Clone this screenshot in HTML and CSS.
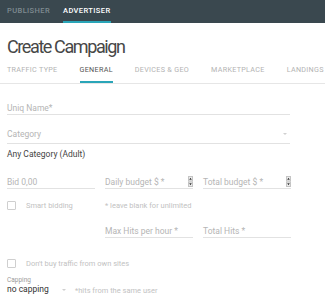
FILE: index.html
```html
<!DOCTYPE html>
<html lang="en">
<head>
    <meta charset="UTF-8">
    <meta name="viewport" content="width=device-width, initial-scale=1.0">
    <title>Create Campaign</title>
    <link rel="stylesheet" href="styles.css">
</head>
<body>
    <div class="topbar">
        <span class="toptab">PUBLISHER</span>
        <span class="toptab active">ADVERTISER</span>
    </div>
    <h1 class="title">Create Campaign</h1>
    <div class="tabs">
        <span class="tab">TRAFFIC TYPE</span>
        <span class="tab active">GENERAL</span>
        <span class="tab">DEVICES &amp; GEO</span>
        <span class="tab">MARKETPLACE</span>
        <span class="tab">LANDINGS</span>
    </div>
    <div class="form">
        <div class="field wide name">Uniq Name*</div>
        <div class="field wide category">Category<span class="arrow"></span></div>
        <div class="chosen">Any Category (Adult)</div>

        <div class="row budgets">
            <div class="field">Bid 0,00</div>
            <div class="field">Daily budget $ *
                <svg class="spin" width="5" height="11" viewBox="0 0 5 11"><rect x="0.5" y="0.5" width="4" height="4.5" fill="#ececec" stroke="#c4c4c4"/><rect x="0.5" y="6" width="4" height="4.5" fill="#ececec" stroke="#c4c4c4"/><path d="M1.2 3.8 L2.5 1.8 L3.8 3.8 Z M1.2 7.2 L2.5 9.2 L3.8 7.2 Z" fill="#333"/></svg>
            </div>
            <div class="field">Total budget $ *
                <svg class="spin" width="5" height="11" viewBox="0 0 5 11"><rect x="0.5" y="0.5" width="4" height="4.5" fill="#ececec" stroke="#c4c4c4"/><rect x="0.5" y="6" width="4" height="4.5" fill="#ececec" stroke="#c4c4c4"/><path d="M1.2 3.8 L2.5 1.8 L3.8 3.8 Z M1.2 7.2 L2.5 9.2 L3.8 7.2 Z" fill="#333"/></svg>
            </div>
        </div>

        <div class="row smart">
            <div class="check"><span class="box"></span>Smart bidding</div>
            <div class="hint">* leave blank for unlimited</div>
        </div>

        <div class="row hits">
            <div class="spacer"></div>
            <div class="field">Max Hits per hour *</div>
            <div class="field">Total Hits *</div>
        </div>

        <div class="check own"><span class="box"></span>Don't buy traffic from own sites</div>

        <div class="small">Capping</div>
        <div class="row capping">
            <div class="field value">no capping<span class="arrow"></span></div>
            <div class="hint">*hits from the same user</div>
        </div>
    </div>
</body>
</html>
```

FILE: styles.css
```css
*{
    box-sizing: border-box;
}
body{
    margin: 0;
    font-family: Roboto, "Liberation Sans", sans-serif;
    background-color: #fff;
    color: #333;
    overflow: hidden;
}
.topbar{
    height: 23px;
    background-color: #3a484f;
    display: flex;
    padding-left: 7px;
}
.toptab{
    font-size: 7.5px;
    font-weight: 500;
    letter-spacing: 0.4px;
    color: #7f8b91;
    line-height: 21px;
    margin-right: 13px;
    border-bottom: 2px solid transparent;
}
.toptab.active{
    color: #fff;
    border-bottom-color: #2aa5b8;
}
.title{
    margin: 0;
    padding: 12px 7px 0;
    font-size: 18px;
    letter-spacing: -1.4px;
    font-weight: 400;
    line-height: 24px;
    color: #474747;
}
.tabs{
    display: flex;
    padding-left: 7px;
    margin-top: 5px;
    border-bottom: 1px solid #e6e6e6;
    white-space: nowrap;
}
.tab{
    flex-shrink: 0;
    font-size: 7.2px;
    letter-spacing: 0.3px;
    color: #b3b3b3;
    line-height: 11px;
    padding-bottom: 6px;
    margin-right: 22px;
    border-bottom: 2px solid transparent;
}
.tab.active{
    color: #555;
    border-bottom-color: #2aa5b8;
}
.form{
    padding-left: 7px;
    font-size: 8.5px;
}
.field{
    width: 88px;
    height: 12px;
    border-bottom: 1px solid #e2e2e2;
    color: #b5b5b5;
    line-height: 11px;
    display: flex;
    align-items: center;
    justify-content: space-between;
    white-space: nowrap;
}
.field.wide{
    width: 283px;
}
.field.name{
    margin-top: 19px;
}
.field.category{
    margin-top: 14px;
    height: 15px;
    padding-bottom: 4px;
}
.arrow{
    width: 0;
    height: 0;
    border-left: 2px solid transparent;
    border-right: 2px solid transparent;
    border-top: 2px solid #d0d0d0;
    margin-right: 3px;
}
.chosen{
    margin-top: 5px;
    color: #444;
    line-height: 11px;
}
.row{
    display: flex;
    gap: 10px;
}
.budgets{
    margin-top: 17px;
}
.spin{
    margin-right: 0;
    margin-top: -2px;
}
.smart{
    margin-top: 11px;
    align-items: center;
}
.check{
    width: 88px;
    display: flex;
    align-items: center;
    color: #c2c2c2;
    font-size: 7.5px;
    line-height: 11px;
    white-space: nowrap;
}
.box{
    width: 9px;
    height: 9px;
    border: 1px solid #cfcfcf;
    border-radius: 1px;
    margin: 0 10px 0 0;
}
.hint{
    color: #c2c2c2;
    font-size: 7.5px;
    line-height: 11px;
    white-space: nowrap;
}
.hits{
    margin-top: 15px;
}
.spacer{
    width: 88px;
}
.check.own{
    width: auto;
    margin-top: 20px;
}
.small{
    margin-top: 7px;
    font-size: 6.5px;
    color: #9a9a9a;
    line-height: 8px;
}
.capping{
    align-items: center;
    gap: 6px;
}
.field.value{
    width: 62px;
    color: #333;
}
```
